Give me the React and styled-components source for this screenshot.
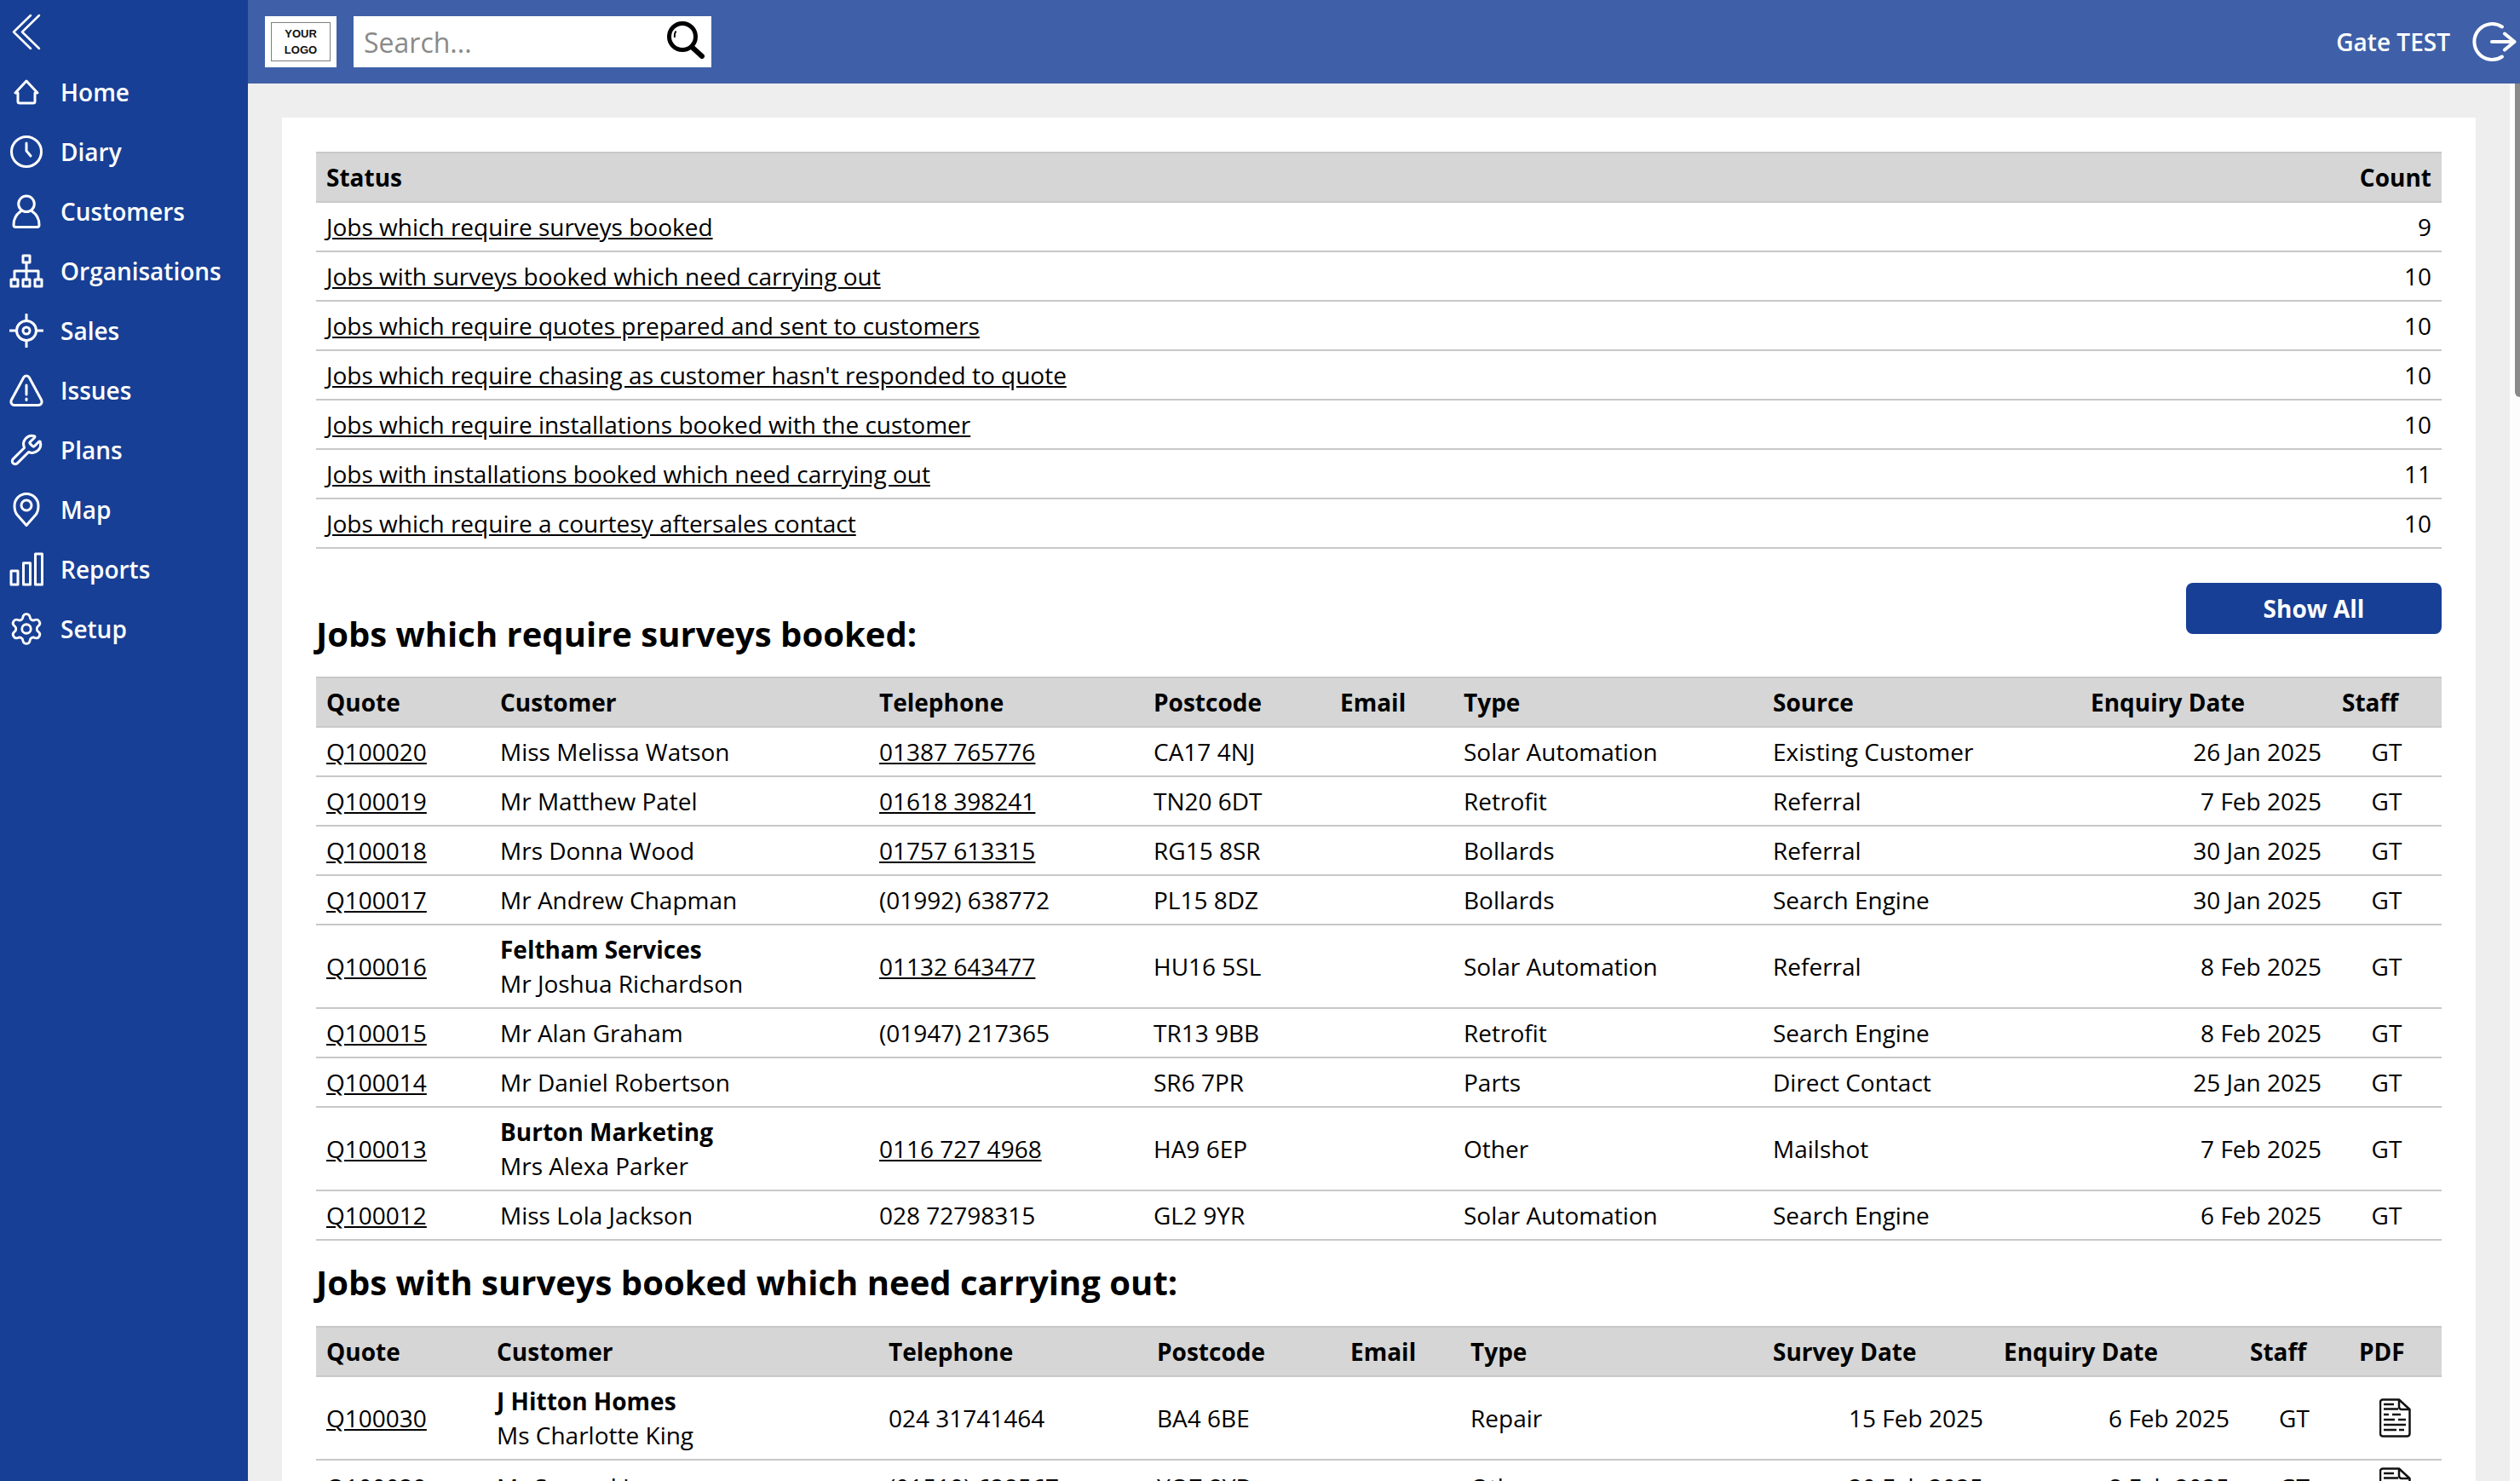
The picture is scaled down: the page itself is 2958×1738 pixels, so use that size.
import styled, { createGlobalStyle } from 'styled-components';
import { Settings, Wrench } from 'lucide-react';

const statusRows = [
  ['Jobs which require surveys booked', 9],
  ['Jobs with surveys booked which need carrying out', 10],
  ['Jobs which require quotes prepared and sent to customers', 10],
  ["Jobs which require chasing as customer hasn't responded to quote", 10],
  ['Jobs which require installations booked with the customer', 10],
  ['Jobs with installations booked which need carrying out', 11],
  ['Jobs which require a courtesy aftersales contact', 10],
];

const surveyCols = [204, 445, 322, 219, 145, 363, 373, 295, 129];
const surveyRows = [
  { quote: 'Q100020', name: 'Miss Melissa Watson', tel: '01387 765776', telLink: true, post: 'CA17 4NJ', type: 'Solar Automation', source: 'Existing Customer', date: '26 Jan 2025' },
  { quote: 'Q100019', name: 'Mr Matthew Patel', tel: '01618 398241', telLink: true, post: 'TN20 6DT', type: 'Retrofit', source: 'Referral', date: '7 Feb 2025' },
  { quote: 'Q100018', name: 'Mrs Donna Wood', tel: '01757 613315', telLink: true, post: 'RG15 8SR', type: 'Bollards', source: 'Referral', date: '30 Jan 2025' },
  { quote: 'Q100017', name: 'Mr Andrew Chapman', tel: '(01992) 638772', post: 'PL15 8DZ', type: 'Bollards', source: 'Search Engine', date: '30 Jan 2025' },
  { quote: 'Q100016', org: 'Feltham Services', name: 'Mr Joshua Richardson', tel: '01132 643477', telLink: true, post: 'HU16 5SL', type: 'Solar Automation', source: 'Referral', date: '8 Feb 2025' },
  { quote: 'Q100015', name: 'Mr Alan Graham', tel: '(01947) 217365', post: 'TR13 9BB', type: 'Retrofit', source: 'Search Engine', date: '8 Feb 2025' },
  { quote: 'Q100014', name: 'Mr Daniel Robertson', tel: '', post: 'SR6 7PR', type: 'Parts', source: 'Direct Contact', date: '25 Jan 2025' },
  { quote: 'Q100013', org: 'Burton Marketing', name: 'Mrs Alexa Parker', tel: '0116 727 4968', telLink: true, post: 'HA9 6EP', type: 'Other', source: 'Mailshot', date: '7 Feb 2025' },
  { quote: 'Q100012', name: 'Miss Lola Jackson', tel: '028 72798315', post: 'GL2 9YR', type: 'Solar Automation', source: 'Search Engine', date: '6 Feb 2025' },
];

const bookedCols = [200, 460, 315, 227, 141, 355, 271, 289, 128, 109];
const bookedRows = [
  { quote: 'Q100030', org: 'J Hitton Homes', name: 'Ms Charlotte King', tel: '024 31741464', post: 'BA4 6BE', type: 'Repair', survey: '15 Feb 2025', date: '6 Feb 2025' },
  { quote: 'Q100029', name: 'Mr Samuel Lee', tel: '(01519) 628567', post: 'YO7 8YD', type: 'Other', survey: '20 Feb 2025', date: '8 Feb 2025' },
];

function HomeIcon() {
  return (
    <NavSvg viewBox="0 0 40 40">
      <path d="M7 21 20 7l13 14h-3v10a2 2 0 0 1-2 2H12a2 2 0 0 1-2-2V21Z" />
    </NavSvg>
  );
}

function ClockIcon() {
  return (
    <NavSvg viewBox="0 0 40 40">
      <circle cx="20" cy="20" r="17.5" />
      <path d="M20 10v9l5 6" />
    </NavSvg>
  );
}

function PersonIcon() {
  return (
    <NavSvg viewBox="0 0 40 40">
      <circle cx="20" cy="11.3" r="9.3" />
      <path d="M14 19.5C8.5 23 5 29 5 36a2.5 2.5 0 0 0 2.5 2.5h25A2.5 2.5 0 0 0 35 36c0-7-3.5-13-9-16.5" />
    </NavSvg>
  );
}

function OrgIcon() {
  return (
    <NavSvg viewBox="0 0 40 40">
      <rect x="16" y="2" width="8" height="8" />
      <rect x="2" y="30" width="8" height="8" />
      <rect x="16" y="30" width="8" height="8" />
      <rect x="30" y="30" width="8" height="8" />
      <path d="M20 10v20M6 30V20h28v10" />
    </NavSvg>
  );
}

function TargetIcon() {
  return (
    <NavSvg viewBox="0 0 40 40">
      <circle cx="20" cy="20" r="11.5" />
      <circle cx="20" cy="20" r="4" />
      <path d="M20 1v7.5M20 31.5V39M1 20h7.5M31.5 20H39" />
    </NavSvg>
  );
}

function WarningIcon() {
  return (
    <NavSvg viewBox="0 0 40 40">
      <path d="M20 3c1.5 0 2.6.8 3.3 2l14.1 26c1.6 3 0 6.500-3.400 6.500H6c-3.400 0-5-3.500-3.400-6.500L16.700 5C17.400 3.800 18.500 3 20 3Z" />
      <path d="M20 14v11M20 30v1.500" />
    </NavSvg>
  );
}

function WrenchIcon() {
  return <WrenchGlyph size={40} strokeWidth={1.8} />;
}

function PinIcon() {
  return (
    <NavSvg viewBox="0 0 40 40">
      <path d="M20 38.500 9 26c-2-2.500-3-6-3-10.500a14 14 0 0 1 28 0c0 4.500-1 8-3 10.500Z" />
      <circle cx="20" cy="15" r="6" />
    </NavSvg>
  );
}

function BarsIcon() {
  return (
    <NavSvg viewBox="0 0 40 40">
      <rect x="2" y="22" width="8" height="16" />
      <rect x="16.500" y="12.700" width="8" height="25.300" />
      <rect x="30.500" y="2" width="8" height="36" />
    </NavSvg>
  );
}

function GearIcon() {
  return <GearGlyph size={42} strokeWidth={1.6} />;
}

const navItems = [
  ['Home', HomeIcon],
  ['Diary', ClockIcon],
  ['Customers', PersonIcon],
  ['Organisations', OrgIcon],
  ['Sales', TargetIcon],
  ['Issues', WarningIcon],
  ['Plans', WrenchIcon],
  ['Map', PinIcon],
  ['Reports', BarsIcon],
  ['Setup', GearIcon],
];

function PdfIcon() {
  return (
    <PdfSvg viewBox="0 0 37 46">
      <path d="M4 1.500h19L35.500 13v28.500a3 3 0 0 1-3 3H4a3 3 0 0 1-3-3v-37a3 3 0 0 1 3-3Z" />
      <path d="M23 1.500V10a3 3 0 0 0 3 3h9.500" />
      <path d="M5 7h12M5 12.500h17M5 19h6M15 19h10M5 25h13M22 25h9M5 31h26M5 37h15M23 37h6" />
    </PdfSvg>
  );
}

function CustomerCell({ org, name }) {
  if (!org) return <Td>{name}</Td>;

  return (
    <StackedTd>
      <OrgName>{org}</OrgName>
      <PersonName>{name}</PersonName>
    </StackedTd>
  );
}

function App() {
  return (
    <Page>
      <GlobalStyle />

      <Sidebar>
        <CollapseButton>
          <ChevronSvg viewBox="0 0 40 46">
            <path d="M25 3 5 22.500l20 19.500M35 3 15 22.500l20 19.500" />
          </ChevronSvg>
        </CollapseButton>

        {navItems.map(([label, Icon]) => (
          <NavItem key={label}>
            <NavIconBox>
              <Icon />
            </NavIconBox>
            {label}
          </NavItem>
        ))}
      </Sidebar>

      <Column>
        <TopBar>
          <LogoBox>
            <LogoFrame>
              <span>YOUR</span>
              <span>LOGO</span>
            </LogoFrame>
          </LogoBox>

          <SearchBox>
            <SearchInput placeholder="Search..." />
            <SearchSvg viewBox="0 0 44 44">
              <circle cx="18" cy="18" r="15.500" strokeWidth="5" />
              <path d="M30 31 41 41" strokeWidth="6" strokeLinecap="round" />
              <path d="M9 19c-.6-3 0-5.500 1.500-7.500" strokeWidth="1.800" />
            </SearchSvg>
          </SearchBox>

          <UserName>Gate TEST</UserName>
          <LogoutSvg viewBox="0 0 52 48">
            <path d="M35 6.500A21 21 0 1 0 35 41.500" />
            <path d="M23 24h26M38 14.500 49.500 24 38 33.500" />
          </LogoutSvg>
        </TopBar>

        <Content>
          <Card>
            <Table>
              <colgroup>
                <Col $w={2300} />
                <Col $w={195} />
              </colgroup>
              <thead>
                <tr>
                  <Th>Status</Th>
                  <Th $align="right">Count</Th>
                </tr>
              </thead>
              <tbody>
                {statusRows.map(([label, count]) => (
                  <tr key={label}>
                    <Td>
                      <RowLink href="#">{label}</RowLink>
                    </Td>
                    <Td $align="right">{count}</Td>
                  </tr>
                ))}
              </tbody>
            </Table>

            <SectionHead>
              <Title>Jobs which require surveys booked:</Title>
              <ShowAllButton>Show All</ShowAllButton>
            </SectionHead>

            <Table>
              <colgroup>
                {surveyCols.map((w, i) => (
                  <Col key={i} $w={w} />
                ))}
              </colgroup>
              <thead>
                <tr>
                  <Th>Quote</Th>
                  <Th>Customer</Th>
                  <Th>Telephone</Th>
                  <Th>Postcode</Th>
                  <Th>Email</Th>
                  <Th>Type</Th>
                  <Th>Source</Th>
                  <Th>Enquiry Date</Th>
                  <Th>Staff</Th>
                </tr>
              </thead>
              <tbody>
                {surveyRows.map(row => (
                  <tr key={row.quote}>
                    <Td>
                      <RowLink href="#">{row.quote}</RowLink>
                    </Td>
                    <CustomerCell org={row.org} name={row.name} />
                    <Td>{row.telLink ? <RowLink href="#">{row.tel}</RowLink> : row.tel}</Td>
                    <Td>{row.post}</Td>
                    <Td />
                    <Td>{row.type}</Td>
                    <Td>{row.source}</Td>
                    <Td $align="right">{row.date}</Td>
                    <Td $align="center">GT</Td>
                  </tr>
                ))}
              </tbody>
            </Table>

            <SecondTitle>Jobs with surveys booked which need carrying out:</SecondTitle>

            <Table>
              <colgroup>
                {bookedCols.map((w, i) => (
                  <Col key={i} $w={w} />
                ))}
              </colgroup>
              <thead>
                <tr>
                  <Th>Quote</Th>
                  <Th>Customer</Th>
                  <Th>Telephone</Th>
                  <Th>Postcode</Th>
                  <Th>Email</Th>
                  <Th>Type</Th>
                  <Th>Survey Date</Th>
                  <Th>Enquiry Date</Th>
                  <Th>Staff</Th>
                  <Th>PDF</Th>
                </tr>
              </thead>
              <tbody>
                {bookedRows.map(row => (
                  <tr key={row.quote}>
                    <Td>
                      <RowLink href="#">{row.quote}</RowLink>
                    </Td>
                    <CustomerCell org={row.org} name={row.name} />
                    <Td>{row.tel}</Td>
                    <Td>{row.post}</Td>
                    <Td />
                    <Td>{row.type}</Td>
                    <Td $align="right">{row.survey}</Td>
                    <Td $align="right">{row.date}</Td>
                    <Td $align="center">GT</Td>
                    <StackedTd $align="center">
                      <PdfIcon />
                    </StackedTd>
                  </tr>
                ))}
              </tbody>
            </Table>
          </Card>

          <ScrollTrack>
            <ScrollThumb />
            <ScrollArrow />
          </ScrollTrack>
        </Content>
      </Column>
    </Page>
  );
}

const GlobalStyle = createGlobalStyle`
  html,
  body {
    margin: 0;
    height: 100%;
    overflow: hidden;
  }

  * {
    box-sizing: border-box;
  }

  body {
    font-family: 'Open Sans', 'Noto Sans', sans-serif;
    font-size: 28px;
    color: #000;
  }
`;

const Page = styled.div`
  display: grid;
  grid-template-columns: 291px 1fr;
  height: 100vh;
  overflow: hidden;
`;

const Sidebar = styled.nav`
  background-color: #173f95;
  color: #fff;
`;

const CollapseButton = styled.div`
  height: 73px;
  padding: 15px 0 0 11px;
`;

const NavItem = styled.div`
  display: flex;
  align-items: center;
  gap: 20px;
  height: 70px;
  padding-left: 11px;
  font-size: 28px;
  font-weight: 600;
`;

const NavIconBox = styled.span`
  display: flex;
  align-items: center;
  justify-content: center;
  width: 40px;
  height: 40px;
`;

const NavSvg = styled.svg`
  width: 40px;
  height: auto;
  fill: none;
  stroke: #fff;
  stroke-width: 3;
  stroke-linecap: round;
  stroke-linejoin: round;
  flex-shrink: 0;
`;

const ChevronSvg = styled(NavSvg)`
  stroke-width: 2.500;
`;

const WrenchGlyph = styled(Wrench)`
  color: #fff;
  flex-shrink: 0;
`;

const GearGlyph = styled(Settings)`
  color: #fff;
  flex-shrink: 0;
`;

const Column = styled.div`
  display: flex;
  flex-direction: column;
  min-width: 0;
`;

const TopBar = styled.header`
  display: flex;
  align-items: center;
  flex-shrink: 0;
  height: 98px;
  padding: 0 4px 0 20px;
  background-color: #3f60a8;
  color: #fff;
`;

const LogoBox = styled.div`
  display: flex;
  align-items: center;
  justify-content: center;
  width: 84px;
  height: 60px;
  margin-right: 20px;
  background-color: #fff;
`;

const LogoFrame = styled.div`
  display: flex;
  flex-direction: column;
  align-items: center;
  justify-content: center;
  width: 70px;
  height: 46px;
  border: 1.5px solid #808080;
  color: #111;
  font-family: 'Liberation Sans', Arial, sans-serif;
  font-size: 13px;
  font-weight: 700;
  line-height: 19px;
`;

const SearchBox = styled.div`
  display: flex;
  align-items: center;
  justify-content: space-between;
  width: 420px;
  height: 60px;
  padding: 0 8px 0 12px;
  background-color: #fff;
`;

const SearchInput = styled.input`
  width: 300px;
  border: 0;
  outline: 0;
  padding: 0;
  font-family: inherit;
  font-size: 32px;

  &::placeholder {
    color: #8a8a8a;
    opacity: 1;
  }
`;

const SearchSvg = styled.svg`
  width: 44px;
  height: 44px;
  margin-top: -4px;
  fill: none;
  stroke: #000;
`;

const UserName = styled.span`
  margin-left: auto;
  margin-right: 26px;
  font-size: 28px;
  font-weight: 600;
`;

const LogoutSvg = styled.svg`
  width: 52px;
  height: 48px;
  fill: none;
  stroke: #fff;
  stroke-width: 4;
  stroke-linecap: round;
  stroke-linejoin: round;
`;

const Content = styled.main`
  position: relative;
  flex: 1;
  min-height: 0;
  overflow: hidden;
  padding: 40px 52px 0 40px;
  background-color: #eee;
`;

const Card = styled.section`
  min-height: 100%;
  padding: 40px;
  background-color: #fff;
`;

const Table = styled.table`
  width: 100%;
  table-layout: fixed;
  border-collapse: separate;
  border-spacing: 0;
`;

const Col = styled.col`
  width: ${props => props.$w}px;
`;

const Th = styled.th`
  height: 60px;
  padding: 0 12px;
  background-color: #d6d6d6;
  border-top: 2px solid #c8c8c8;
  border-bottom: 2px solid #c8c8c8;
  font-size: 28px;
  font-weight: 700;
  text-align: ${props => props.$align || 'left'};
  white-space: nowrap;
`;

const Td = styled.td`
  height: 58px;
  padding: 0 12px;
  border-bottom: 2px solid #c8c8c8;
  font-size: 28px;
  text-align: ${props => props.$align || 'left'};
  white-space: nowrap;
`;

const StackedTd = styled(Td)`
  padding: 8px 12px;
`;

const RowLink = styled.a`
  color: #000;
  text-decoration: underline;
`;

const OrgName = styled.div`
  font-weight: 700;
  line-height: 40px;
`;

const PersonName = styled.div`
  line-height: 40px;
`;

const SectionHead = styled.div`
  display: flex;
  align-items: flex-end;
  justify-content: space-between;
  height: 150px;
  padding-bottom: 25px;
`;

const Title = styled.h2`
  margin: 0;
  font-size: 40px;
  font-weight: 700;
  line-height: 50px;
`;

const SecondTitle = styled(Title)`
  height: 100px;
  padding-top: 24px;
`;

const ShowAllButton = styled.button`
  width: 300px;
  height: 60px;
  margin-bottom: 25px;
  border: 0;
  border-radius: 8px;
  background-color: #173f95;
  color: #fff;
  font-family: inherit;
  font-size: 28px;
  font-weight: 700;
`;

const PdfSvg = styled.svg`
  display: block;
  width: 37px;
  height: 46px;
  margin: 0 auto;
  fill: none;
  stroke: #111;
  stroke-width: 2.500;
  stroke-linejoin: round;
`;

const ScrollTrack = styled.div`
  position: absolute;
  top: 0;
  right: 0;
  bottom: 0;
  width: 12px;
  background-color: #fdfdfd;
`;

const ScrollThumb = styled.div`
  position: absolute;
  top: 0;
  right: 0;
  width: 6px;
  height: 368px;
  background-color: #8a8a8a;
  border-bottom-left-radius: 6px;
`;

const ScrollArrow = styled.div`
  position: absolute;
  bottom: 9px;
  right: -6px;
  border-top: 13px solid #8a8a8a;
  border-left: 6px solid transparent;
  border-right: 6px solid transparent;
`;

export default App;
